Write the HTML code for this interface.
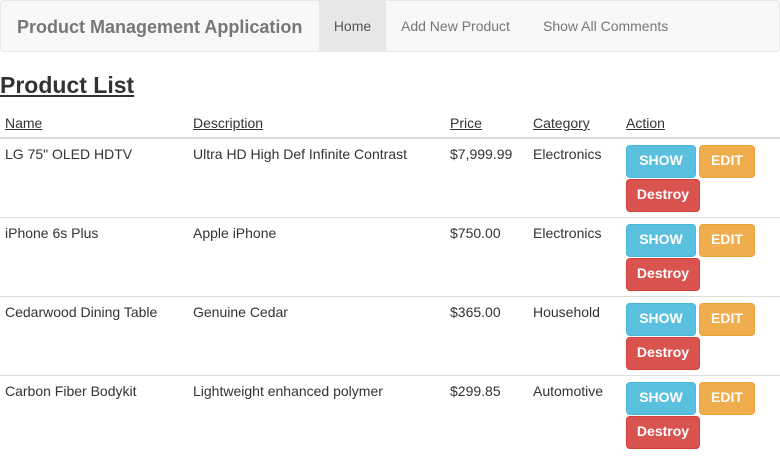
<!DOCTYPE html>
<html><head><style>
body{margin:0;font-family:"Liberation Sans",sans-serif;font-size:14px;color:#333;background:#fff;width:780px;height:467px;overflow:hidden;position:relative}
.nav{position:absolute;left:0;top:0;width:778px;height:50px;background:#f8f8f8;border:1px solid #e7e7e7;border-radius:4px}
.brand{position:absolute;left:16px;top:16px;font-size:18px;font-weight:bold;color:#777}
.nl{position:absolute;top:0;height:50px;line-height:51px;color:#777;font-size:14px}
h1{position:absolute;left:0;top:72px;margin:0;font-size:23px;font-weight:bold;text-decoration:underline;color:#333}
.c{position:absolute}
.th{top:115px;text-decoration:underline}
.line{position:absolute;left:0;width:780px;height:1px;background:#ddd}
.b{position:absolute;height:33px;line-height:29px;color:#fff;font-weight:bold;text-align:center;border-radius:4px;font-size:14px;box-sizing:border-box}
.s{background:#5bc0de;border:1px solid #46b8da;width:70px}
.e{background:#f0ad4e;border:1px solid #eea236;width:56px}
.d{background:#d9534f;border:1px solid #d43f3a;width:74px}
</style></head><body>
<div class="nav">
<div class="brand">Product Management Application</div>
<div class="nl" style="left:318px;width:67px;background:#e7e7e7;color:#555;text-align:center">Home</div>
<div class="nl" style="left:400px">Add New Product</div>
<div class="nl" style="left:542px">Show All Comments</div>
</div>
<h1>Product List</h1>
<div class="c th" style="left:5px">Name</div>
<div class="c th" style="left:193px">Description</div>
<div class="c th" style="left:450px">Price</div>
<div class="c th" style="left:533px">Category</div>
<div class="c th" style="left:626px">Action</div>
<div class="line" style="top:137px;height:2px"></div>

<div class="c" style="left:5px;top:146px">LG 75" OLED HDTV</div>
<div class="c" style="left:193px;top:146px">Ultra HD High Def Infinite Contrast</div>
<div class="c" style="left:450px;top:146px">$7,999.99</div>
<div class="c" style="left:533px;top:146px">Electronics</div>
<div class="b s" style="left:626px;top:145px">SHOW</div><div class="b e" style="left:699px;top:145px">EDIT</div><div class="b d" style="left:626px;top:179px">Destroy</div>
<div class="line" style="top:217px"></div>

<div class="c" style="left:5px;top:225px">iPhone 6s Plus</div>
<div class="c" style="left:193px;top:225px">Apple iPhone</div>
<div class="c" style="left:450px;top:225px">$750.00</div>
<div class="c" style="left:533px;top:225px">Electronics</div>
<div class="b s" style="left:626px;top:224px">SHOW</div><div class="b e" style="left:699px;top:224px">EDIT</div><div class="b d" style="left:626px;top:258px">Destroy</div>
<div class="line" style="top:296px"></div>

<div class="c" style="left:5px;top:304px">Cedarwood Dining Table</div>
<div class="c" style="left:193px;top:304px">Genuine Cedar</div>
<div class="c" style="left:450px;top:304px">$365.00</div>
<div class="c" style="left:533px;top:304px">Household</div>
<div class="b s" style="left:626px;top:303px">SHOW</div><div class="b e" style="left:699px;top:303px">EDIT</div><div class="b d" style="left:626px;top:337px">Destroy</div>
<div class="line" style="top:375px"></div>

<div class="c" style="left:5px;top:383px">Carbon Fiber Bodykit</div>
<div class="c" style="left:193px;top:383px">Lightweight enhanced polymer</div>
<div class="c" style="left:450px;top:383px">$299.85</div>
<div class="c" style="left:533px;top:383px">Automotive</div>
<div class="b s" style="left:626px;top:382px">SHOW</div><div class="b e" style="left:699px;top:382px">EDIT</div><div class="b d" style="left:626px;top:416px">Destroy</div>
</body></html>
